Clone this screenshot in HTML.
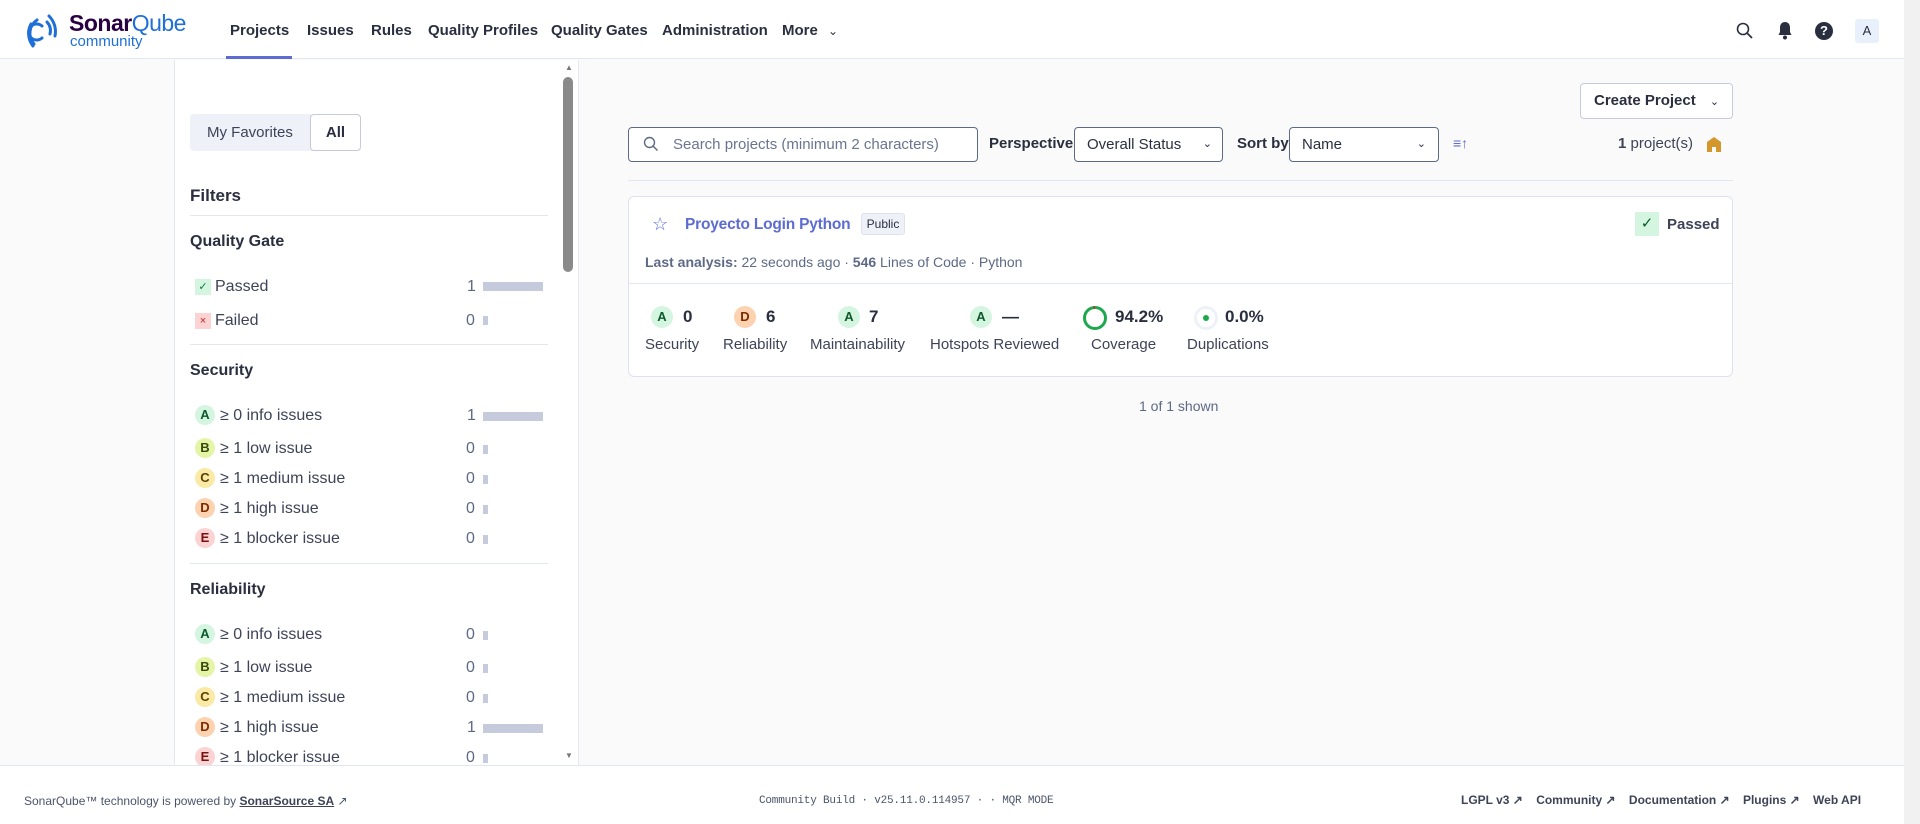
<!DOCTYPE html>
<html><head><meta charset="utf-8"><style>
*{box-sizing:border-box;margin:0;padding:0}
body{width:1920px;height:824px;overflow:hidden;font-family:"Liberation Sans",sans-serif;background:#fafafa;color:#2a2f40;position:relative;font-size:16px}
.abs{position:absolute}
.top{left:0;top:0;width:1904px;height:59px;background:#fff;border-bottom:1px solid #e1e6f3}
.strip{left:0;top:0;width:1904px;height:4px;background:#f3f7fc}
.nav{top:22px;font-size:15px;font-weight:bold;color:#2a2f40;white-space:nowrap}
.side{left:174px;top:60px;width:405px;height:705px;background:#fff;border-left:1px solid #e5e8ef;border-right:1px solid #e5e8ef}
.h{font-weight:bold;font-size:16px;color:#2a2f40}
.row{font-size:16px;color:#3e4358}
.badge{display:inline-block;width:20px;height:20px;border-radius:10px;text-align:center;line-height:20px;font-size:13px;font-weight:bold}
.cnt{font-size:16px;color:#5d6a85}
.bar{height:9px;background:#c5cbdc}
.line{height:1px;background:#e1e6f3}
.foot{left:0;top:765px;width:1904px;height:59px;background:#fff;border-top:1px solid #e1e6f3;font-size:12px;color:#4b546b}
.sel{border:1px solid #5d6a85;border-radius:4px;background:#fff;height:35px;font-size:15px;line-height:33px;padding-left:12px}
.met{font-size:15px;color:#3e4358}
.mv{font-size:17px;font-weight:bold;color:#2a2f40}
</style></head><body>
<div class="abs strip"></div>
<div class="abs top"></div>
<svg class="abs" style="left:27px;top:12px" width="36" height="38" viewBox="0 0 36 38"><g fill="none" stroke="#1f6fd8" stroke-width="3" stroke-linecap="round"><path d="M15 14a8 8 0 1 0 0 12"/><path d="M10 8a16 16 0 0 0 -3 24"/><path d="M22 4a22 22 0 0 1 6 20"/><path d="M20 10a13 13 0 0 1 3 12"/><path d="M4 12a20 20 0 0 0 2 22"/></g></svg>
<div class="abs" style="left:69px;top:10px;font-size:23px;color:#290042;font-weight:bold;letter-spacing:-0.5px">Sonar<span style="color:#1f6fd8;font-weight:normal">Qube</span></div>
<div class="abs" style="left:70px;top:33px;font-size:15px;color:#1f6fd8">community</div>
<div class="abs nav" style="left:230px">Projects</div>
<div class="abs" style="left:226px;top:56px;width:66px;height:3px;background:#5d6cd0"></div>
<div class="abs nav" style="left:307px">Issues</div>
<div class="abs nav" style="left:371px">Rules</div>
<div class="abs nav" style="left:428px">Quality Profiles</div>
<div class="abs nav" style="left:551px">Quality Gates</div>
<div class="abs nav" style="left:662px">Administration</div>
<div class="abs nav" style="left:782px">More <span style="font-weight:normal;font-size:12px;margin-left:6px">&#8964;</span></div>
<svg class="abs" style="left:1736px;top:22px" width="18" height="18" viewBox="0 0 18 18"><circle cx="7" cy="7" r="5.5" fill="none" stroke="#2a2f40" stroke-width="1.6"/><path d="M11 11l5 5" stroke="#2a2f40" stroke-width="1.8"/></svg>
<svg class="abs" style="left:1777px;top:21px" width="16" height="19" viewBox="0 0 16 19"><path d="M8 1c-3 0-5 2.3-5 5.5V11L1.5 14h13L13 11V6.5C13 3.3 11 1 8 1z" fill="#2a2f40"/><circle cx="8" cy="16.5" r="2" fill="#2a2f40"/></svg>
<div class="abs" style="left:1815px;top:22px;width:18px;height:18px;border-radius:9px;background:#2a2f40;color:#fff;font-size:13px;font-weight:bold;text-align:center;line-height:18px">?</div>
<div class="abs" style="left:1855px;top:19px;width:24px;height:24px;border-radius:3px;background:#e8f1fb;color:#2a2f40;font-size:13px;text-align:center;line-height:24px">A</div>
<div class="abs side"></div>
<div class="abs" style="left:563px;top:77px;width:10px;height:195px;border-radius:5px;background:#8a8a8a"></div>
<div class="abs" style="left:565px;top:63px;font-size:8px;color:#777">&#9650;</div>
<div class="abs" style="left:565px;top:751px;font-size:8px;color:#777">&#9660;</div>
<div class="abs" style="left:190px;top:114px;width:171px;height:37px;border-radius:4px;background:#eef1f8"></div>
<div class="abs" style="left:207px;top:124px;font-size:15px;color:#3e4358">My Favorites</div>
<div class="abs" style="left:310px;top:114px;width:51px;height:37px;border-radius:4px;background:#fff;border:1px solid #c5cbdc;text-align:center;line-height:35px;font-weight:bold;font-size:15px">All</div>
<div class="abs h" style="left:190px;top:186px;font-size:17px">Filters</div>
<div class="abs line" style="left:190px;top:215px;width:358px"></div>
<div class="abs h" style="left:190px;top:233px">Quality Gate</div>
<div class="abs" style="left:195px;top:279px;width:16px;height:16px;background:#d4f6e0;color:#0d7a3c;font-size:11px;text-align:center;line-height:16px">&#10003;</div>
<div class="abs row" style="left:215px;top:278px">Passed</div>
<div class="abs cnt" style="left:467px;top:278px">1</div><div class="abs bar" style="left:483px;top:282px;width:60px"></div>
<div class="abs" style="left:195px;top:313px;width:16px;height:16px;background:#fbd3d3;color:#c22;font-size:11px;text-align:center;line-height:16px">&#215;</div>
<div class="abs row" style="left:215px;top:312px">Failed</div>
<div class="abs cnt" style="left:466px;top:312px">0</div><div class="abs bar" style="left:483px;top:316px;width:5px"></div>
<div class="abs line" style="left:190px;top:344px;width:358px"></div>
<div class="abs h" style="left:190px;top:362px">Security</div>
<div class="abs line" style="left:190px;top:563px;width:358px"></div>
<div class="abs h" style="left:190px;top:581px">Reliability</div>

<div class="abs badge" style="left:195px;top:405px;background:#d4f6e0;color:#0d5a2c">A</div><div class="abs row" style="left:220px;top:407px">≥ 0 info issues</div><div class="abs cnt" style="left:467px;top:407px">1</div><div class="abs bar" style="left:483px;top:412px;width:60px"></div>
<div class="abs badge" style="left:195px;top:438px;background:#e4f5a8;color:#3a4a0a">B</div><div class="abs row" style="left:220px;top:440px">≥ 1 low issue</div><div class="abs cnt" style="left:466px;top:440px">0</div><div class="abs bar" style="left:483px;top:445px;width:5px"></div>
<div class="abs badge" style="left:195px;top:468px;background:#fbe9a6;color:#5a4300">C</div><div class="abs row" style="left:220px;top:470px">≥ 1 medium issue</div><div class="abs cnt" style="left:466px;top:470px">0</div><div class="abs bar" style="left:483px;top:475px;width:5px"></div>
<div class="abs badge" style="left:195px;top:498px;background:#fcd2b0;color:#7a2c00">D</div><div class="abs row" style="left:220px;top:500px">≥ 1 high issue</div><div class="abs cnt" style="left:466px;top:500px">0</div><div class="abs bar" style="left:483px;top:505px;width:5px"></div>
<div class="abs badge" style="left:195px;top:528px;background:#fbd3d3;color:#7a1010">E</div><div class="abs row" style="left:220px;top:530px">≥ 1 blocker issue</div><div class="abs cnt" style="left:466px;top:530px">0</div><div class="abs bar" style="left:483px;top:535px;width:5px"></div>

<div class="abs badge" style="left:195px;top:624px;background:#d4f6e0;color:#0d5a2c">A</div><div class="abs row" style="left:220px;top:626px">≥ 0 info issues</div><div class="abs cnt" style="left:466px;top:626px">0</div><div class="abs bar" style="left:483px;top:631px;width:5px"></div>
<div class="abs badge" style="left:195px;top:657px;background:#e4f5a8;color:#3a4a0a">B</div><div class="abs row" style="left:220px;top:659px">≥ 1 low issue</div><div class="abs cnt" style="left:466px;top:659px">0</div><div class="abs bar" style="left:483px;top:664px;width:5px"></div>
<div class="abs badge" style="left:195px;top:687px;background:#fbe9a6;color:#5a4300">C</div><div class="abs row" style="left:220px;top:689px">≥ 1 medium issue</div><div class="abs cnt" style="left:466px;top:689px">0</div><div class="abs bar" style="left:483px;top:694px;width:5px"></div>
<div class="abs badge" style="left:195px;top:717px;background:#fcd2b0;color:#7a2c00">D</div><div class="abs row" style="left:220px;top:719px">≥ 1 high issue</div><div class="abs cnt" style="left:467px;top:719px">1</div><div class="abs bar" style="left:483px;top:724px;width:60px"></div>
<div class="abs badge" style="left:195px;top:747px;background:#fbd3d3;color:#7a1010">E</div><div class="abs row" style="left:220px;top:749px">≥ 1 blocker issue</div><div class="abs cnt" style="left:466px;top:749px">0</div><div class="abs bar" style="left:483px;top:754px;width:5px"></div>

<div class="abs" style="left:1580px;top:83px;width:153px;height:36px;border:1px solid #c5cbdc;border-radius:4px;background:#fff;font-weight:bold;font-size:15px;line-height:34px;padding-left:13px">Create Project <span style="font-weight:normal;font-size:11px;margin-left:10px">&#8964;</span></div>
<div class="abs sel" style="left:628px;top:127px;width:350px;padding-left:44px;color:#6a7590">Search projects (minimum 2 characters)</div>
<svg class="abs" style="left:643px;top:136px" width="16" height="16" viewBox="0 0 16 16"><circle cx="6.5" cy="6.5" r="5" fill="none" stroke="#5d6a85" stroke-width="1.4"/><path d="M10 10l4.5 4.5" stroke="#5d6a85" stroke-width="1.5"/></svg>
<div class="abs" style="left:989px;top:135px;font-weight:bold;font-size:15px">Perspective</div>
<div class="abs sel" style="left:1074px;top:127px;width:149px">Overall Status<span style="position:absolute;right:10px;font-size:11px">&#8964;</span></div>
<div class="abs" style="left:1237px;top:135px;font-weight:bold;font-size:15px">Sort by</div>
<div class="abs sel" style="left:1289px;top:127px;width:150px">Name<span style="position:absolute;right:12px;font-size:11px">&#8964;</span></div>
<div class="abs" style="left:1453px;top:135px;font-size:14px;color:#5d6cd0;font-weight:bold">&#8801;&#8593;</div>
<div class="abs" style="left:1618px;top:135px;font-size:15px;color:#3e4358"><b>1</b> project(s)</div>
<svg class="abs" style="left:1707px;top:137px" width="14" height="15" viewBox="0 0 14 15"><path d="M7 0L0 5v10h5v-5h4v5h5V5z" fill="#d4972b"/></svg>
<div class="abs line" style="left:628px;top:180px;width:1105px"></div>
<div class="abs" style="left:628px;top:196px;width:1105px;height:181px;background:#fff;border:1px solid #dde2ee;border-radius:6px"></div>
<div class="abs line" style="left:629px;top:283px;width:1103px"></div>
<div class="abs" style="left:652px;top:214px;font-size:18px;color:#5d6cd0">&#9734;</div>
<div class="abs" style="left:685px;top:216px;font-size:15.5px;font-weight:bold;color:#5d6cd0;letter-spacing:-0.2px">Proyecto Login Python</div>
<div class="abs" style="left:861px;top:213px;width:44px;height:22px;background:#eef1f8;border:1px solid #dde2ee;border-radius:3px;font-size:12px;text-align:center;line-height:20px">Public</div>
<div class="abs" style="left:1635px;top:212px;width:24px;height:24px;background:#d4f6e0;color:#0d5a2c;text-align:center;line-height:24px;font-size:15px">&#10003;</div>
<div class="abs" style="left:1667px;top:216px;font-size:15px;font-weight:bold;color:#3e4358">Passed</div>
<div class="abs" style="left:645px;top:254px;font-size:14px;color:#5d6a85"><b>Last analysis:</b> 22 seconds ago · <b>546</b> Lines of Code · Python</div>
<div class="abs badge" style="left:651px;top:306px;width:22px;height:22px;border-radius:11px;line-height:22px;background:#d4f6e0;color:#0d5a2c">A</div><div class="abs mv" style="left:683px;top:307px">0</div><div class="abs met" style="left:645px;top:336px">Security</div>
<div class="abs badge" style="left:734px;top:306px;width:22px;height:22px;border-radius:11px;line-height:22px;background:#fcd2b0;color:#7a2c00">D</div><div class="abs mv" style="left:766px;top:307px">6</div><div class="abs met" style="left:723px;top:336px">Reliability</div>
<div class="abs badge" style="left:838px;top:306px;width:22px;height:22px;border-radius:11px;line-height:22px;background:#d4f6e0;color:#0d5a2c">A</div><div class="abs mv" style="left:869px;top:307px">7</div><div class="abs met" style="left:810px;top:336px">Maintainability</div>
<div class="abs badge" style="left:970px;top:306px;width:22px;height:22px;border-radius:11px;line-height:22px;background:#d4f6e0;color:#0d5a2c">A</div><div class="abs mv" style="left:1002px;top:307px">—</div><div class="abs met" style="left:930px;top:336px">Hotspots Reviewed</div>
<svg class="abs" style="left:1082px;top:305px" width="26" height="26" viewBox="0 0 26 26"><circle cx="13" cy="13" r="10.5" fill="none" stroke="#1ea84d" stroke-width="3"/><path d="M11.5 2.6a10.5 10.5 0 0 1 1.5-0.1" stroke="#d02f3a" stroke-width="3"/></svg>
<div class="abs mv" style="left:1115px;top:307px">94.2%</div><div class="abs met" style="left:1091px;top:336px">Coverage</div>
<svg class="abs" style="left:1193px;top:305px" width="26" height="26" viewBox="0 0 26 26"><circle cx="13" cy="13" r="10.5" fill="none" stroke="#eef1f8" stroke-width="3"/><circle cx="13" cy="13" r="3" fill="#1ea84d"/></svg>
<div class="abs mv" style="left:1225px;top:307px">0.0%</div><div class="abs met" style="left:1187px;top:336px">Duplications</div>
<div class="abs" style="left:1139px;top:398px;font-size:14px;color:#5d6a85">1 of 1 shown</div>
<div class="abs" style="left:1904px;top:0;width:16px;height:824px;background:#f1f1f1"></div>
<div class="abs foot"></div>
<div class="abs" style="left:24px;top:794px;font-size:12px;color:#4b546b">SonarQube™ technology is powered by <b style="text-decoration:underline;color:#3e4358">SonarSource SA</b> &#8599;</div>
<div class="abs" style="left:759px;top:795px;font-size:11px;color:#4b546b;font-family:'Liberation Mono',monospace;letter-spacing:-0.2px">Community Build · v25.11.0.114957 · · MQR MODE</div>
<div class="abs" style="left:1461px;top:793px;font-size:12px;font-weight:bold;color:#3e4358;white-space:nowrap">LGPL v3 &#8599;&nbsp;&nbsp;&nbsp;&nbsp;Community &#8599;&nbsp;&nbsp;&nbsp;&nbsp;Documentation &#8599;&nbsp;&nbsp;&nbsp;&nbsp;Plugins &#8599;&nbsp;&nbsp;&nbsp;&nbsp;Web API</div>
</body></html>
